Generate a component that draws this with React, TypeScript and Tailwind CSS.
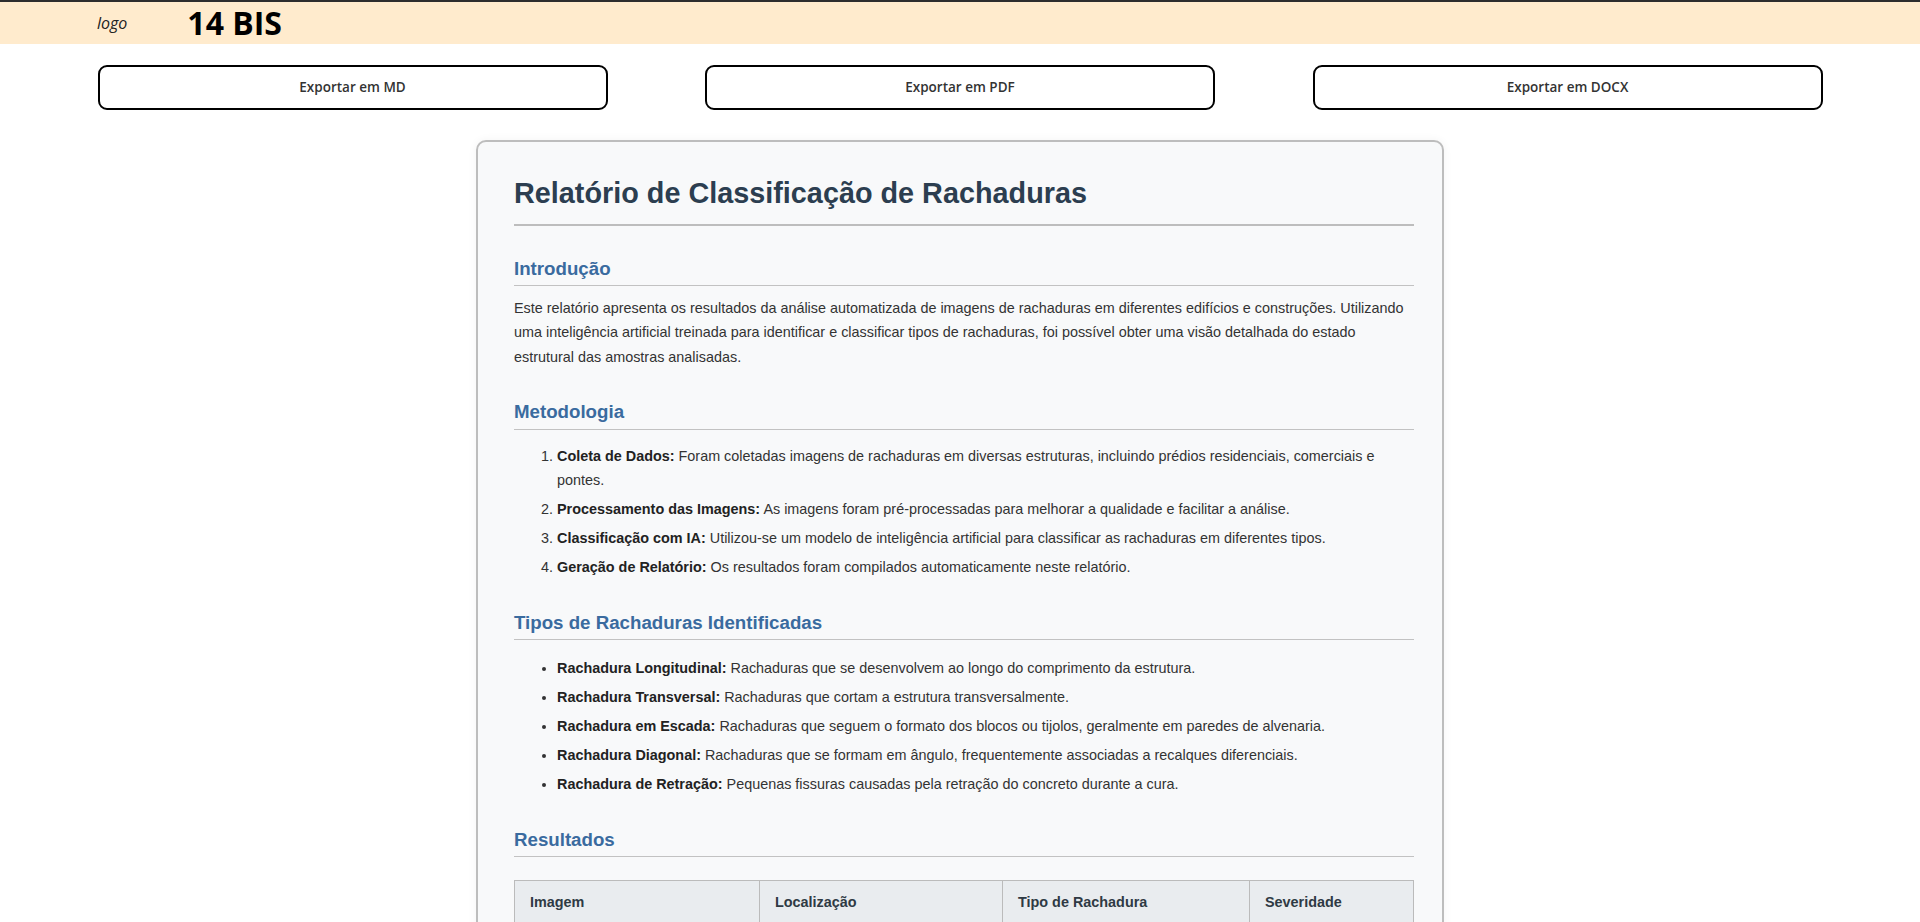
import React from "react";

const metodologia = [
  {
    t: "Coleta de Dados:",
    d: "Foram coletadas imagens de rachaduras em diversas estruturas, incluindo prédios residenciais, comerciais e pontes.",
  },
  {
    t: "Processamento das Imagens:",
    d: "As imagens foram pré-processadas para melhorar a qualidade e facilitar a análise.",
  },
  {
    t: "Classificação com IA:",
    d: "Utilizou-se um modelo de inteligência artificial para classificar as rachaduras em diferentes tipos.",
  },
  {
    t: "Geração de Relatório:",
    d: "Os resultados foram compilados automaticamente neste relatório.",
  },
];

const tipos = [
  {
    t: "Rachadura Longitudinal:",
    d: "Rachaduras que se desenvolvem ao longo do comprimento da estrutura.",
  },
  {
    t: "Rachadura Transversal:",
    d: "Rachaduras que cortam a estrutura transversalmente.",
  },
  {
    t: "Rachadura em Escada:",
    d: "Rachaduras que seguem o formato dos blocos ou tijolos, geralmente em paredes de alvenaria.",
  },
  {
    t: "Rachadura Diagonal:",
    d: "Rachaduras que se formam em ângulo, frequentemente associadas a recalques diferenciais.",
  },
  {
    t: "Rachadura de Retração:",
    d: "Pequenas fissuras causadas pela retração do concreto durante a cura.",
  },
];

const resultados = [
  ["imagem_01.jpg", "Edifício A - Fachada Norte", "Longitudinal", "Moderada"],
  ["imagem_02.jpg", "Edifício B - Pilar Central", "Diagonal", "Alta"],
  ["imagem_03.jpg", "Ponte C - Viga Principal", "Transversal", "Alta"],
  ["imagem_04.jpg", "Residência D - Parede Interna", "Escada", "Baixa"],
  ["imagem_05.jpg", "Edifício E - Laje", "Retração", "Baixa"],
];

function SectionTitle({ children }: { children: React.ReactNode }) {
  return (
    <h2 className="mt-8 mb-[10px] border-b border-[#c2c2c2] pb-[5px] text-[18.7px] font-bold leading-[1.2] text-[#3a6b9f]">
      {children}
    </h2>
  );
}

function ExportButton({ label }: { label: string }) {
  return (
    <button className="h-[45px] w-[510px] rounded-[9px] border-2 border-black bg-white text-[13.5px] font-semibold text-[#333] [font-family:'Open_Sans',sans-serif]">
      {label}
    </button>
  );
}

export default function App() {
  return (
    <div className="min-h-screen bg-white [font-family:'Liberation_Sans',Arial,sans-serif]">
      <header className="flex h-[44px] items-center gap-[60px] border-t-2 border-[#2d2d2d] bg-[#ffebcd] pl-[97px] [font-family:'Open_Sans',sans-serif]">
        <span className="text-[16px] italic text-[#222]">logo</span>
        <h1 className="text-[32px] font-bold leading-none text-black">14 BIS</h1>
      </header>

      <div className="mt-[21px] flex justify-evenly">
        <ExportButton label="Exportar em MD" />
        <ExportButton label="Exportar em PDF" />
        <ExportButton label="Exportar em DOCX" />
      </div>

      <main className="mx-auto mt-[30px] mb-10 w-[968px] rounded-[10px] border-2 border-[#bdbdbd] bg-[#f8f9fa] pt-[34px] pr-[28px] pb-10 pl-[36px] text-[14.4px] leading-[24.5px] text-[#333] shadow-[0_0_10px_rgba(0,0,0,0.05)]">
        <h1 className="border-b-2 border-[#bdbdbd] pb-[13px] text-[28.8px] font-bold leading-[1.2] text-[#2c3e50]">
          Relatório de Classificação de Rachaduras
        </h1>

        <SectionTitle>Introdução</SectionTitle>
        <p>
          Este relatório apresenta os resultados da análise automatizada de imagens de rachaduras em
          diferentes edifícios e construções. Utilizando uma inteligência artificial treinada para
          identificar e classificar tipos de rachaduras, foi possível obter uma visão detalhada do
          estado estrutural das amostras analisadas.
        </p>

        <SectionTitle>Metodologia</SectionTitle>
        <ol className="list-decimal pt-[4px] pl-[43px]">
          {metodologia.map((m) => (
            <li key={m.t} className="mb-[4.5px]">
              <strong className="font-bold text-[#222]">{m.t}</strong> {m.d}
            </li>
          ))}
        </ol>

        <SectionTitle>Tipos de Rachaduras Identificadas</SectionTitle>
        <ul className="list-disc pt-[6px] pl-[43px]">
          {tipos.map((m) => (
            <li key={m.t} className="mb-[4.5px]">
              <strong className="font-bold text-[#222]">{m.t}</strong> {m.d}
            </li>
          ))}
        </ul>

        <SectionTitle>Resultados</SectionTitle>
        <table className="mt-[23px] w-full border-collapse text-left">
          <thead>
            <tr className="bg-[#e9ecef]">
              <th className="w-[245px] border border-[#bbbbbb] px-[15px] py-[9px] font-bold text-[#2f3a44]">Imagem</th>
              <th className="w-[243px] border border-[#bbbbbb] px-[15px] py-[9px] font-bold text-[#2f3a44]">Localização</th>
              <th className="w-[247px] border border-[#bbbbbb] px-[15px] py-[9px] font-bold text-[#2f3a44]">Tipo de Rachadura</th>
              <th className="border border-[#bbbbbb] px-[15px] py-[9px] font-bold text-[#2f3a44]">Severidade</th>
            </tr>
          </thead>
          <tbody>
            {resultados.map((r) => (
              <tr key={r[0]}>
                {r.map((c, i) => (
                  <td key={i} className="border border-[#bbbbbb] px-[15px] py-[9px]">
                    {c}
                  </td>
                ))}
              </tr>
            ))}
          </tbody>
        </table>

        <SectionTitle>Conclusão</SectionTitle>
        <p>
          A análise automatizada permitiu identificar com rapidez os principais tipos de rachaduras
          presentes nas estruturas avaliadas. Recomenda-se a inspeção presencial dos casos de
          severidade alta para confirmação do diagnóstico e definição das medidas corretivas.
        </p>
      </main>
    </div>
  );
}
